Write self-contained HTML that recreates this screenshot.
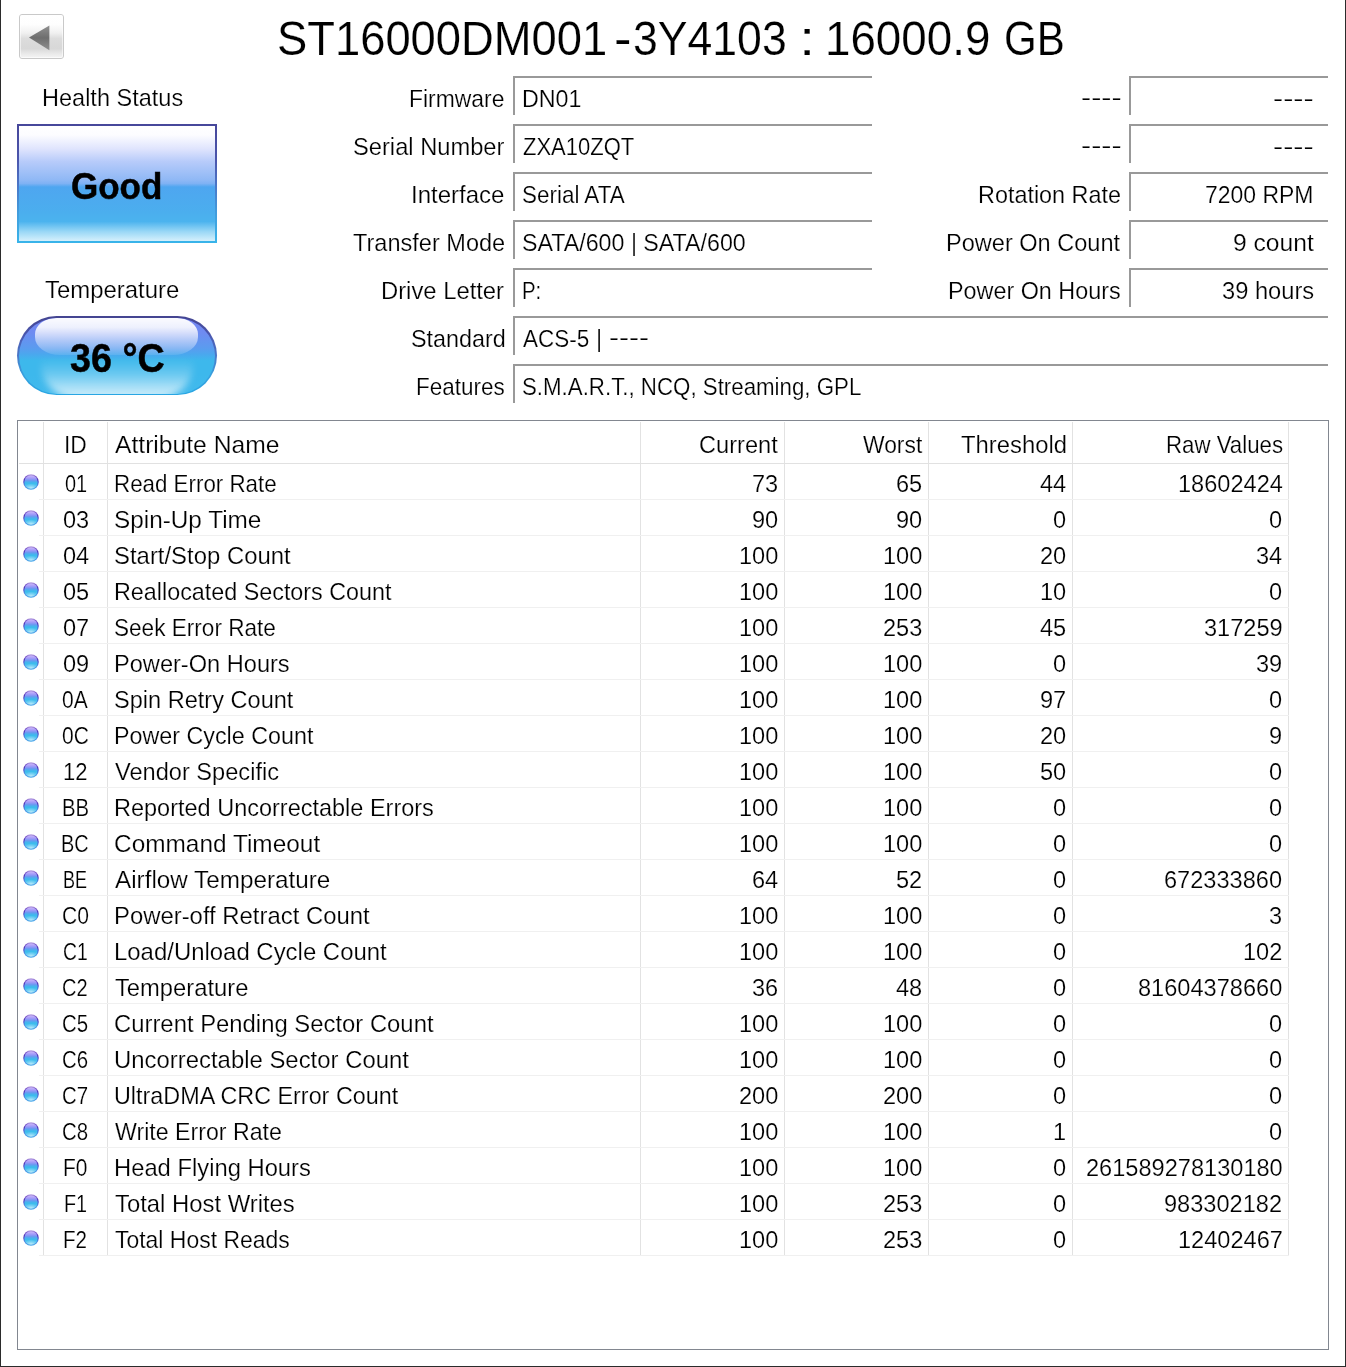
<!DOCTYPE html>
<html><head><meta charset="utf-8"><title>CrystalDiskInfo</title>
<style>
html,body{margin:0;padding:0}
body{width:1346px;height:1367px;position:relative;overflow:hidden;background:#fff;font-family:"Liberation Sans", sans-serif;color:#000}
.win{position:absolute;left:0;top:0;width:1344px;height:1366px;border-left:1px solid #2b2b2b;border-right:1px solid #2b2b2b;border-bottom:1px solid #2b2b2b}
.t{position:absolute;white-space:pre;line-height:1;transform-origin:0 0;-webkit-text-stroke:0.2px #fff}
.fb{position:absolute;height:37px;border-left:2px solid #999;border-top:2px solid #999;box-sizing:content-box}
.back{position:absolute;left:19px;top:14px;width:43px;height:43px;border:1px solid #c9c9c9;border-radius:3px;box-sizing:content-box;
  background:linear-gradient(#fff 0%,#fefefe 22%,#f0f0f0 42%,#dcdcdc 55%,#d8d8d8 78%,#ececec 92%,#f4f4f4 100%)}
.back svg{position:absolute;left:0;top:0}
.good{position:absolute;left:17px;top:124px;width:200px;height:119px;
  background:linear-gradient(#47479a 0%,#4a55ac 30%,#4a74c6 50%,#419ddd 75%,#38b4ea 100%)}
.good i{position:absolute;left:2px;top:2px;right:2px;bottom:2px;
  background:linear-gradient(#fff 0%,#fcfcff 8%,#dfe4fd 20%,#b7cbfa 31%,#8fb8f5 47%,#7fb2f4 50%,#4ea6f0 53%,#4baeee 75%,#4bb3ee 83%,#9bd8f6 92%,#d5f0fc 100%)}
.pill{position:absolute;left:17.3px;top:316.2px;width:199.4px;height:78.9px;border-radius:39.5px;
  background:linear-gradient(#444490 0%,#4a58b0 25%,#4a78c8 50%,#38a0de 75%,#28a6e3 100%)}
.pill b{position:absolute;left:1.4px;top:1.4px;right:1.4px;bottom:1.4px;border-radius:38px;overflow:hidden;
  background:linear-gradient(#7585f3 0%,#6e8cf1 20%,#5a9cef 40%,#4aa8ee 48%,#3db8ec 56%,#3db8ec 75%,#42baed 100%)}
.pill u{position:absolute;left:22px;right:22px;bottom:-6px;height:41px;border-radius:0 0 40px 40px/0 0 34px 34px;
  background:linear-gradient(rgba(255,255,255,0) 0%,rgba(255,255,255,.24) 38%,rgba(255,255,255,.58) 72%,rgba(255,255,255,.8) 100%);filter:blur(3.5px)}
.pill i{position:absolute;left:16.3px;top:0.9px;width:163.4px;height:36.5px;border-radius:21px 21px 25px 25px/16px 16px 18px 18px;
  background:linear-gradient(rgba(255,255,255,.97) 0%,rgba(255,255,255,.88) 25%,rgba(255,255,255,.5) 60%,rgba(255,255,255,.1) 100%)}
.tbl{position:absolute;left:17px;top:420px;width:1310px;height:928px;border:1px solid #828790;box-sizing:content-box}
.vl{position:absolute;top:422px;width:1px;height:834px;background:#e2e2e2}
.hl{position:absolute;height:1px;background:#f0f0f0}
.dot{position:absolute;left:23px;width:16px;height:16px;border-radius:50%;transform:scale(.972);
  background:linear-gradient(#bba4e2 0%,#7350c4 16%,#4a2cb0 34%,#4a48d0 54%,#4a88e2 75%,#45a8ea 100%)}
.dot::after{content:'';position:absolute;left:1.3px;top:1.2px;right:1.3px;bottom:1.1px;border-radius:50%;
  background:radial-gradient(ellipse 52% 36% at 50% 98%,rgba(200,238,251,.95) 0%,rgba(160,225,248,.5) 55%,rgba(120,210,244,0) 100%),
  linear-gradient(#d0c2fa 0%,#bcaaf9 10%,#9a98f8 26%,#6a9af0 40%,#4ab0ee 50%,#3bbcec 60%,#50c2ef 78%,#70cef2 100%)}
.back::after{content:'';position:absolute;left:0;top:0;right:0;bottom:0;border-radius:2px;box-shadow:inset 0 0 0 1px rgba(255,255,255,.55)}
</style></head>
<body>
<div class="win"></div>
<div class="back"><svg width="43" height="43" viewBox="0 0 43 43"><defs><linearGradient id="tg" x1="0" y1="0" x2="0" y2="1"><stop offset="0" stop-color="#909090"/><stop offset=".5" stop-color="#6e6e6e"/><stop offset="1" stop-color="#909090"/></linearGradient></defs><path d="M9 22.6 L29.4 10.6 L29.4 35.2 Z" fill="url(#tg)"/></svg></div>
<div class="good"><i></i></div>
<div class="pill"><b><u></u><i></i></b></div>
<div class="fb" style="left:513px;top:76px;width:357px"></div>
<div class="fb" style="left:513px;top:124px;width:357px"></div>
<div class="fb" style="left:513px;top:172px;width:357px"></div>
<div class="fb" style="left:513px;top:220px;width:357px"></div>
<div class="fb" style="left:513px;top:268px;width:357px"></div>
<div class="fb" style="left:513px;top:316px;width:813px"></div>
<div class="fb" style="left:513px;top:364px;width:813px"></div>
<div class="fb" style="left:1129px;top:76px;width:197px"></div>
<div class="fb" style="left:1129px;top:124px;width:197px"></div>
<div class="fb" style="left:1129px;top:172px;width:197px"></div>
<div class="fb" style="left:1129px;top:220px;width:197px"></div>
<div class="fb" style="left:1129px;top:268px;width:197px"></div>
<div class="tbl"></div>
<div class="vl" style="left:43px"></div>
<div class="vl" style="left:107px"></div>
<div class="vl" style="left:640px"></div>
<div class="vl" style="left:784px"></div>
<div class="vl" style="left:928px"></div>
<div class="vl" style="left:1072px"></div>
<div class="vl" style="left:1288px"></div>
<div class="hl" style="left:19px;top:463px;width:1270px;background:#e1e1e1"></div>
<div class="hl" style="left:39px;top:499px;width:1250px"></div>
<div class="hl" style="left:39px;top:535px;width:1250px"></div>
<div class="hl" style="left:39px;top:571px;width:1250px"></div>
<div class="hl" style="left:39px;top:607px;width:1250px"></div>
<div class="hl" style="left:39px;top:643px;width:1250px"></div>
<div class="hl" style="left:39px;top:679px;width:1250px"></div>
<div class="hl" style="left:39px;top:715px;width:1250px"></div>
<div class="hl" style="left:39px;top:751px;width:1250px"></div>
<div class="hl" style="left:39px;top:787px;width:1250px"></div>
<div class="hl" style="left:39px;top:823px;width:1250px"></div>
<div class="hl" style="left:39px;top:859px;width:1250px"></div>
<div class="hl" style="left:39px;top:895px;width:1250px"></div>
<div class="hl" style="left:39px;top:931px;width:1250px"></div>
<div class="hl" style="left:39px;top:967px;width:1250px"></div>
<div class="hl" style="left:39px;top:1003px;width:1250px"></div>
<div class="hl" style="left:39px;top:1039px;width:1250px"></div>
<div class="hl" style="left:39px;top:1075px;width:1250px"></div>
<div class="hl" style="left:39px;top:1111px;width:1250px"></div>
<div class="hl" style="left:39px;top:1147px;width:1250px"></div>
<div class="hl" style="left:39px;top:1183px;width:1250px"></div>
<div class="hl" style="left:39px;top:1219px;width:1250px"></div>
<div class="hl" style="left:39px;top:1255px;width:1250px"></div>
<div class="dot" style="top:474px"></div>
<div class="dot" style="top:510px"></div>
<div class="dot" style="top:546px"></div>
<div class="dot" style="top:582px"></div>
<div class="dot" style="top:618px"></div>
<div class="dot" style="top:654px"></div>
<div class="dot" style="top:690px"></div>
<div class="dot" style="top:726px"></div>
<div class="dot" style="top:762px"></div>
<div class="dot" style="top:798px"></div>
<div class="dot" style="top:834px"></div>
<div class="dot" style="top:870px"></div>
<div class="dot" style="top:906px"></div>
<div class="dot" style="top:942px"></div>
<div class="dot" style="top:978px"></div>
<div class="dot" style="top:1014px"></div>
<div class="dot" style="top:1050px"></div>
<div class="dot" style="top:1086px"></div>
<div class="dot" style="top:1122px"></div>
<div class="dot" style="top:1158px"></div>
<div class="dot" style="top:1194px"></div>
<div class="dot" style="top:1230px"></div>
<div class="title"><span class="t" style="left:277.44px;top:14.00px;font-size:48.8px;transform:scaleX(0.9294);">ST16000DM001</span><span class="t" style="left:613.55px;top:14.00px;font-size:48.8px;transform:scaleX(1.0769);">-</span><span class="t" style="left:633.49px;top:14.00px;font-size:48.8px;transform:scaleX(0.9134);">3Y4103</span> <span class="t" style="left:799.00px;top:14.00px;font-size:48.8px;transform:scaleX(1.2000);">:</span> <span class="t" style="left:824.59px;top:14.00px;font-size:48.8px;transform:scaleX(0.9372);">16000.9</span> <span class="t" style="left:1004.18px;top:14.00px;font-size:48.8px;transform:scaleX(0.8612);">GB</span></div>
<span class="t" style="left:41.63px;top:86.00px;font-size:24.2px;transform:scaleX(0.9721);">Health Status</span>
<span class="t" style="left:71.25px;top:168.00px;font-size:37px;font-weight:700;-webkit-text-stroke:0.5px #000;transform:scaleX(0.9459);">Good</span>
<span class="t" style="left:45.00px;top:278.00px;font-size:24.2px;transform:scaleX(0.9894);">Temperature</span>
<span class="t" style="left:69.50px;top:338.00px;font-size:40.5px;font-weight:700;-webkit-text-stroke:0.5px #000;transform:scaleX(0.9311);">36 °C</span>
<span class="t" style="left:409.45px;top:87.00px;font-size:24.2px;transform:scaleX(0.9464);">Firmware</span>
<span class="t" style="left:521.74px;top:87.00px;font-size:24.2px;transform:scaleX(0.9605);">DN01</span>
<span class="t" style="left:353.02px;top:135.00px;font-size:24.2px;transform:scaleX(0.9796);">Serial Number</span>
<span class="t" style="left:522.70px;top:135.00px;font-size:24.2px;transform:scaleX(0.9091);">ZXA10ZQT</span>
<span class="t" style="left:411.41px;top:183.00px;font-size:24.2px;transform:scaleX(0.9928);">Interface</span>
<span class="t" style="left:521.77px;top:183.00px;font-size:24.2px;transform:scaleX(0.9278);">Serial ATA</span>
<span class="t" style="left:352.70px;top:231.00px;font-size:24.2px;transform:scaleX(0.9729);">Transfer Mode</span>
<span class="t" style="left:521.74px;top:231.00px;font-size:24.2px;transform:scaleX(0.9603);">SATA/600 | SATA/600</span>
<span class="t" style="left:381.42px;top:279.00px;font-size:24.2px;transform:scaleX(0.9842);">Drive Letter</span>
<span class="t" style="left:521.86px;top:279.00px;font-size:24.2px;transform:scaleX(0.8444);">P:</span>
<span class="t" style="left:411.03px;top:327.00px;font-size:24.2px;transform:scaleX(0.9654);">Standard</span>
<div><span class="t" style="left:523.00px;top:327.00px;font-size:24.2px;transform:scaleX(0.9295);">ACS-5</span> <span class="t" style="left:596.25px;top:327.00px;font-size:24.2px;transform:scaleX(0.9750);">|</span> <span class="t" style="left:609.16px;top:325.00px;font-size:24.2px;transform:scaleX(1.2399);">----</span></div>
<span class="t" style="left:415.77px;top:375.00px;font-size:24.2px;transform:scaleX(0.9294);">Features</span>
<span class="t" style="left:521.78px;top:375.00px;font-size:24.2px;transform:scaleX(0.9214);">S.M.A.R.T., NCQ, Streaming, GPL</span>
<span class="t" style="left:1080.54px;top:85.00px;font-size:24.2px;transform:scaleX(1.2598);">----</span>
<span class="t" style="left:1273.34px;top:86.00px;font-size:24.2px;transform:scaleX(1.2598);">----</span>
<span class="t" style="left:1080.54px;top:133.00px;font-size:24.2px;transform:scaleX(1.2598);">----</span>
<span class="t" style="left:1273.34px;top:134.00px;font-size:24.2px;transform:scaleX(1.2598);">----</span>
<span class="t" style="left:978.23px;top:183.00px;font-size:24.2px;transform:scaleX(0.9669);">Rotation Rate</span>
<span class="t" style="left:1205.25px;top:183.00px;font-size:24.2px;transform:scaleX(0.9489);">7200 RPM</span>
<span class="t" style="left:946.43px;top:231.00px;font-size:24.2px;transform:scaleX(0.9737);">Power On Count</span>
<span class="t" style="left:1232.98px;top:231.00px;font-size:24.2px;transform:scaleX(1.0175);">9 count</span>
<span class="t" style="left:948.23px;top:279.00px;font-size:24.2px;transform:scaleX(0.9657);">Power On Hours</span>
<span class="t" style="left:1222.00px;top:279.00px;font-size:24.2px;transform:scaleX(0.9784);">39 hours</span>
<span class="t" style="left:63.56px;top:433.00px;font-size:24.2px;transform:scaleX(0.9438);">ID</span>
<span class="t" style="left:114.70px;top:433.00px;font-size:24.2px;transform:scaleX(1.0195);">Attribute Name</span>
<span class="t" style="left:699.02px;top:433.00px;font-size:24.2px;transform:scaleX(0.9758);">Current</span>
<span class="t" style="left:862.50px;top:433.00px;font-size:24.2px;transform:scaleX(0.9446);">Worst</span>
<span class="t" style="left:961.40px;top:433.00px;font-size:24.2px;transform:scaleX(0.9858);">Threshold</span>
<span class="t" style="left:1165.58px;top:433.00px;font-size:24.2px;transform:scaleX(0.9194);">Raw Values</span>
<span class="t" style="left:64.50px;top:472.00px;font-size:24.2px;transform:scaleX(0.8241);">01</span>
<span class="t" style="left:113.78px;top:472.00px;font-size:24.2px;transform:scaleX(0.9236);">Read Error Rate</span>
<span class="t" style="left:752.21px;top:472.00px;font-size:24.2px;transform:scaleX(0.9750);">73</span>
<span class="t" style="left:896.21px;top:472.00px;font-size:24.2px;transform:scaleX(0.9750);">65</span>
<span class="t" style="left:1040.21px;top:472.00px;font-size:24.2px;transform:scaleX(0.9750);">44</span>
<span class="t" style="left:1177.52px;top:472.00px;font-size:24.2px;transform:scaleX(0.9750);">18602424</span>
<span class="t" style="left:62.50px;top:508.00px;font-size:24.2px;transform:scaleX(0.9750);">03</span>
<span class="t" style="left:113.69px;top:508.00px;font-size:24.2px;transform:scaleX(1.0055);">Spin-Up Time</span>
<span class="t" style="left:752.21px;top:508.00px;font-size:24.2px;transform:scaleX(0.9750);">90</span>
<span class="t" style="left:896.21px;top:508.00px;font-size:24.2px;transform:scaleX(0.9750);">90</span>
<span class="t" style="left:1053.33px;top:508.00px;font-size:24.2px;transform:scaleX(0.9750);">0</span>
<span class="t" style="left:1269.33px;top:508.00px;font-size:24.2px;transform:scaleX(0.9750);">0</span>
<span class="t" style="left:62.50px;top:544.00px;font-size:24.2px;transform:scaleX(0.9750);">04</span>
<span class="t" style="left:113.71px;top:544.00px;font-size:24.2px;transform:scaleX(0.9882);">Start/Stop Count</span>
<span class="t" style="left:739.09px;top:544.00px;font-size:24.2px;transform:scaleX(0.9750);">100</span>
<span class="t" style="left:883.09px;top:544.00px;font-size:24.2px;transform:scaleX(0.9750);">100</span>
<span class="t" style="left:1040.21px;top:544.00px;font-size:24.2px;transform:scaleX(0.9750);">20</span>
<span class="t" style="left:1256.21px;top:544.00px;font-size:24.2px;transform:scaleX(0.9750);">34</span>
<span class="t" style="left:62.50px;top:580.00px;font-size:24.2px;transform:scaleX(0.9750);">05</span>
<span class="t" style="left:113.74px;top:580.00px;font-size:24.2px;transform:scaleX(0.9645);">Reallocated Sectors Count</span>
<span class="t" style="left:739.09px;top:580.00px;font-size:24.2px;transform:scaleX(0.9750);">100</span>
<span class="t" style="left:883.09px;top:580.00px;font-size:24.2px;transform:scaleX(0.9750);">100</span>
<span class="t" style="left:1040.21px;top:580.00px;font-size:24.2px;transform:scaleX(0.9750);">10</span>
<span class="t" style="left:1269.33px;top:580.00px;font-size:24.2px;transform:scaleX(0.9750);">0</span>
<span class="t" style="left:62.50px;top:616.00px;font-size:24.2px;transform:scaleX(0.9750);">07</span>
<span class="t" style="left:113.77px;top:616.00px;font-size:24.2px;transform:scaleX(0.9334);">Seek Error Rate</span>
<span class="t" style="left:739.09px;top:616.00px;font-size:24.2px;transform:scaleX(0.9750);">100</span>
<span class="t" style="left:883.09px;top:616.00px;font-size:24.2px;transform:scaleX(0.9750);">253</span>
<span class="t" style="left:1040.21px;top:616.00px;font-size:24.2px;transform:scaleX(0.9750);">45</span>
<span class="t" style="left:1203.75px;top:616.00px;font-size:24.2px;transform:scaleX(0.9750);">317259</span>
<span class="t" style="left:62.50px;top:652.00px;font-size:24.2px;transform:scaleX(0.9750);">09</span>
<span class="t" style="left:113.72px;top:652.00px;font-size:24.2px;transform:scaleX(0.9753);">Power-On Hours</span>
<span class="t" style="left:739.09px;top:652.00px;font-size:24.2px;transform:scaleX(0.9750);">100</span>
<span class="t" style="left:883.09px;top:652.00px;font-size:24.2px;transform:scaleX(0.9750);">100</span>
<span class="t" style="left:1053.33px;top:652.00px;font-size:24.2px;transform:scaleX(0.9750);">0</span>
<span class="t" style="left:1256.21px;top:652.00px;font-size:24.2px;transform:scaleX(0.9750);">39</span>
<span class="t" style="left:62.15px;top:688.00px;font-size:24.2px;transform:scaleX(0.8702);">0A</span>
<span class="t" style="left:113.73px;top:688.00px;font-size:24.2px;transform:scaleX(0.9740);">Spin Retry Count</span>
<span class="t" style="left:739.09px;top:688.00px;font-size:24.2px;transform:scaleX(0.9750);">100</span>
<span class="t" style="left:883.09px;top:688.00px;font-size:24.2px;transform:scaleX(0.9750);">100</span>
<span class="t" style="left:1040.21px;top:688.00px;font-size:24.2px;transform:scaleX(0.9750);">97</span>
<span class="t" style="left:1269.33px;top:688.00px;font-size:24.2px;transform:scaleX(0.9750);">0</span>
<span class="t" style="left:62.15px;top:724.00px;font-size:24.2px;transform:scaleX(0.8702);">0C</span>
<span class="t" style="left:113.74px;top:724.00px;font-size:24.2px;transform:scaleX(0.9631);">Power Cycle Count</span>
<span class="t" style="left:739.09px;top:724.00px;font-size:24.2px;transform:scaleX(0.9750);">100</span>
<span class="t" style="left:883.09px;top:724.00px;font-size:24.2px;transform:scaleX(0.9750);">100</span>
<span class="t" style="left:1040.21px;top:724.00px;font-size:24.2px;transform:scaleX(0.9750);">20</span>
<span class="t" style="left:1269.33px;top:724.00px;font-size:24.2px;transform:scaleX(0.9750);">9</span>
<span class="t" style="left:62.89px;top:760.00px;font-size:24.2px;transform:scaleX(0.9115);">12</span>
<span class="t" style="left:114.70px;top:760.00px;font-size:24.2px;transform:scaleX(0.9757);">Vendor Specific</span>
<span class="t" style="left:739.09px;top:760.00px;font-size:24.2px;transform:scaleX(0.9750);">100</span>
<span class="t" style="left:883.09px;top:760.00px;font-size:24.2px;transform:scaleX(0.9750);">100</span>
<span class="t" style="left:1040.21px;top:760.00px;font-size:24.2px;transform:scaleX(0.9750);">50</span>
<span class="t" style="left:1269.33px;top:760.00px;font-size:24.2px;transform:scaleX(0.9750);">0</span>
<span class="t" style="left:61.91px;top:796.00px;font-size:24.2px;transform:scaleX(0.8396);">BB</span>
<span class="t" style="left:113.73px;top:796.00px;font-size:24.2px;transform:scaleX(0.9712);">Reported Uncorrectable Errors</span>
<span class="t" style="left:739.09px;top:796.00px;font-size:24.2px;transform:scaleX(0.9750);">100</span>
<span class="t" style="left:883.09px;top:796.00px;font-size:24.2px;transform:scaleX(0.9750);">100</span>
<span class="t" style="left:1053.33px;top:796.00px;font-size:24.2px;transform:scaleX(0.9750);">0</span>
<span class="t" style="left:1269.33px;top:796.00px;font-size:24.2px;transform:scaleX(0.9750);">0</span>
<span class="t" style="left:61.33px;top:832.00px;font-size:24.2px;transform:scaleX(0.8247);">BC</span>
<span class="t" style="left:113.69px;top:832.00px;font-size:24.2px;transform:scaleX(1.0091);">Command Timeout</span>
<span class="t" style="left:739.09px;top:832.00px;font-size:24.2px;transform:scaleX(0.9750);">100</span>
<span class="t" style="left:883.09px;top:832.00px;font-size:24.2px;transform:scaleX(0.9750);">100</span>
<span class="t" style="left:1053.33px;top:832.00px;font-size:24.2px;transform:scaleX(0.9750);">0</span>
<span class="t" style="left:1269.33px;top:832.00px;font-size:24.2px;transform:scaleX(0.9750);">0</span>
<span class="t" style="left:63.05px;top:868.00px;font-size:24.2px;transform:scaleX(0.7452);">BE</span>
<span class="t" style="left:114.70px;top:868.00px;font-size:24.2px;transform:scaleX(1.0031);">Airflow Temperature</span>
<span class="t" style="left:752.21px;top:868.00px;font-size:24.2px;transform:scaleX(0.9750);">64</span>
<span class="t" style="left:896.21px;top:868.00px;font-size:24.2px;transform:scaleX(0.9750);">52</span>
<span class="t" style="left:1053.33px;top:868.00px;font-size:24.2px;transform:scaleX(0.9750);">0</span>
<span class="t" style="left:1164.40px;top:868.00px;font-size:24.2px;transform:scaleX(0.9750);">672333860</span>
<span class="t" style="left:61.68px;top:904.00px;font-size:24.2px;transform:scaleX(0.8721);">C0</span>
<span class="t" style="left:113.71px;top:904.00px;font-size:24.2px;transform:scaleX(0.9869);">Power-off Retract Count</span>
<span class="t" style="left:739.09px;top:904.00px;font-size:24.2px;transform:scaleX(0.9750);">100</span>
<span class="t" style="left:883.09px;top:904.00px;font-size:24.2px;transform:scaleX(0.9750);">100</span>
<span class="t" style="left:1053.33px;top:904.00px;font-size:24.2px;transform:scaleX(0.9750);">0</span>
<span class="t" style="left:1269.33px;top:904.00px;font-size:24.2px;transform:scaleX(0.9750);">3</span>
<span class="t" style="left:62.80px;top:940.00px;font-size:24.2px;transform:scaleX(0.8009);">C1</span>
<span class="t" style="left:113.71px;top:940.00px;font-size:24.2px;transform:scaleX(0.9894);">Load/Unload Cycle Count</span>
<span class="t" style="left:739.09px;top:940.00px;font-size:24.2px;transform:scaleX(0.9750);">100</span>
<span class="t" style="left:883.09px;top:940.00px;font-size:24.2px;transform:scaleX(0.9750);">100</span>
<span class="t" style="left:1053.33px;top:940.00px;font-size:24.2px;transform:scaleX(0.9750);">0</span>
<span class="t" style="left:1243.09px;top:940.00px;font-size:24.2px;transform:scaleX(0.9750);">102</span>
<span class="t" style="left:62.37px;top:976.00px;font-size:24.2px;transform:scaleX(0.8280);">C2</span>
<span class="t" style="left:114.70px;top:976.00px;font-size:24.2px;transform:scaleX(0.9820);">Temperature</span>
<span class="t" style="left:752.21px;top:976.00px;font-size:24.2px;transform:scaleX(0.9750);">36</span>
<span class="t" style="left:896.21px;top:976.00px;font-size:24.2px;transform:scaleX(0.9750);">48</span>
<span class="t" style="left:1053.33px;top:976.00px;font-size:24.2px;transform:scaleX(0.9750);">0</span>
<span class="t" style="left:1138.17px;top:976.00px;font-size:24.2px;transform:scaleX(0.9750);">81604378660</span>
<span class="t" style="left:62.10px;top:1012.00px;font-size:24.2px;transform:scaleX(0.8450);">C5</span>
<span class="t" style="left:113.71px;top:1012.00px;font-size:24.2px;transform:scaleX(0.9861);">Current Pending Sector Count</span>
<span class="t" style="left:739.09px;top:1012.00px;font-size:24.2px;transform:scaleX(0.9750);">100</span>
<span class="t" style="left:883.09px;top:1012.00px;font-size:24.2px;transform:scaleX(0.9750);">100</span>
<span class="t" style="left:1053.33px;top:1012.00px;font-size:24.2px;transform:scaleX(0.9750);">0</span>
<span class="t" style="left:1269.33px;top:1012.00px;font-size:24.2px;transform:scaleX(0.9750);">0</span>
<span class="t" style="left:62.10px;top:1048.00px;font-size:24.2px;transform:scaleX(0.8450);">C6</span>
<span class="t" style="left:113.71px;top:1048.00px;font-size:24.2px;transform:scaleX(0.9881);">Uncorrectable Sector Count</span>
<span class="t" style="left:739.09px;top:1048.00px;font-size:24.2px;transform:scaleX(0.9750);">100</span>
<span class="t" style="left:883.09px;top:1048.00px;font-size:24.2px;transform:scaleX(0.9750);">100</span>
<span class="t" style="left:1053.33px;top:1048.00px;font-size:24.2px;transform:scaleX(0.9750);">0</span>
<span class="t" style="left:1269.33px;top:1048.00px;font-size:24.2px;transform:scaleX(0.9750);">0</span>
<span class="t" style="left:62.10px;top:1084.00px;font-size:24.2px;transform:scaleX(0.8450);">C7</span>
<span class="t" style="left:113.73px;top:1084.00px;font-size:24.2px;transform:scaleX(0.9656);">UltraDMA CRC Error Count</span>
<span class="t" style="left:739.09px;top:1084.00px;font-size:24.2px;transform:scaleX(0.9750);">200</span>
<span class="t" style="left:883.09px;top:1084.00px;font-size:24.2px;transform:scaleX(0.9750);">200</span>
<span class="t" style="left:1053.33px;top:1084.00px;font-size:24.2px;transform:scaleX(0.9750);">0</span>
<span class="t" style="left:1269.33px;top:1084.00px;font-size:24.2px;transform:scaleX(0.9750);">0</span>
<span class="t" style="left:62.10px;top:1120.00px;font-size:24.2px;transform:scaleX(0.8450);">C8</span>
<span class="t" style="left:114.70px;top:1120.00px;font-size:24.2px;transform:scaleX(0.9573);">Write Error Rate</span>
<span class="t" style="left:739.09px;top:1120.00px;font-size:24.2px;transform:scaleX(0.9750);">100</span>
<span class="t" style="left:883.09px;top:1120.00px;font-size:24.2px;transform:scaleX(0.9750);">100</span>
<span class="t" style="left:1053.33px;top:1120.00px;font-size:24.2px;transform:scaleX(0.9750);">1</span>
<span class="t" style="left:1269.33px;top:1120.00px;font-size:24.2px;transform:scaleX(0.9750);">0</span>
<span class="t" style="left:62.93px;top:1156.00px;font-size:24.2px;transform:scaleX(0.8665);">F0</span>
<span class="t" style="left:113.72px;top:1156.00px;font-size:24.2px;transform:scaleX(0.9829);">Head Flying Hours</span>
<span class="t" style="left:739.09px;top:1156.00px;font-size:24.2px;transform:scaleX(0.9750);">100</span>
<span class="t" style="left:883.09px;top:1156.00px;font-size:24.2px;transform:scaleX(0.9750);">100</span>
<span class="t" style="left:1053.33px;top:1156.00px;font-size:24.2px;transform:scaleX(0.9750);">0</span>
<span class="t" style="left:1085.71px;top:1156.00px;font-size:24.2px;transform:scaleX(0.9750);">261589278130180</span>
<span class="t" style="left:63.63px;top:1192.00px;font-size:24.2px;transform:scaleX(0.8179);">F1</span>
<span class="t" style="left:114.70px;top:1192.00px;font-size:24.2px;transform:scaleX(0.9860);">Total Host Writes</span>
<span class="t" style="left:739.09px;top:1192.00px;font-size:24.2px;transform:scaleX(0.9750);">100</span>
<span class="t" style="left:883.09px;top:1192.00px;font-size:24.2px;transform:scaleX(0.9750);">253</span>
<span class="t" style="left:1053.33px;top:1192.00px;font-size:24.2px;transform:scaleX(0.9750);">0</span>
<span class="t" style="left:1164.40px;top:1192.00px;font-size:24.2px;transform:scaleX(0.9750);">983302182</span>
<span class="t" style="left:63.15px;top:1228.00px;font-size:24.2px;transform:scaleX(0.8516);">F2</span>
<span class="t" style="left:114.70px;top:1228.00px;font-size:24.2px;transform:scaleX(0.9485);">Total Host Reads</span>
<span class="t" style="left:739.09px;top:1228.00px;font-size:24.2px;transform:scaleX(0.9750);">100</span>
<span class="t" style="left:883.09px;top:1228.00px;font-size:24.2px;transform:scaleX(0.9750);">253</span>
<span class="t" style="left:1053.33px;top:1228.00px;font-size:24.2px;transform:scaleX(0.9750);">0</span>
<span class="t" style="left:1177.52px;top:1228.00px;font-size:24.2px;transform:scaleX(0.9750);">12402467</span>
</body></html>
